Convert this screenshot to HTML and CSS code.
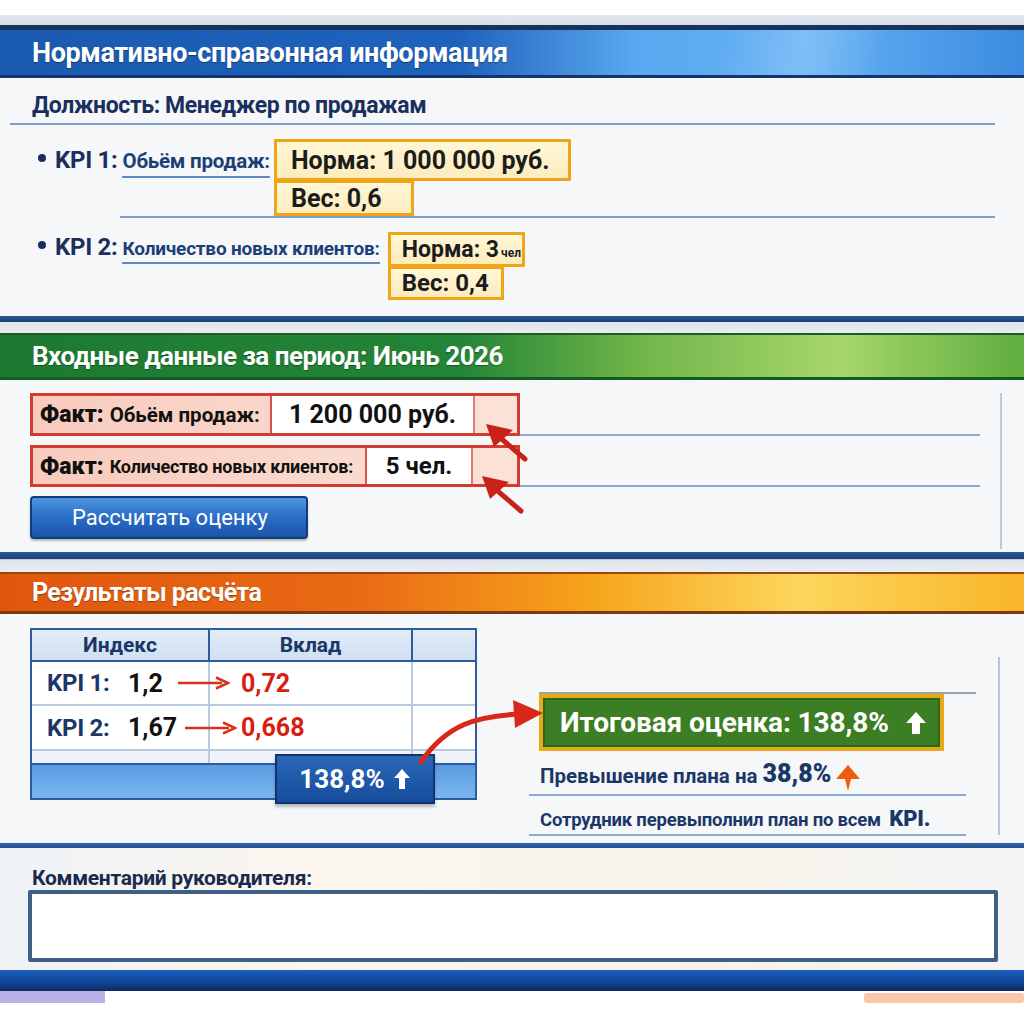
FILE: index.html
```html
<!DOCTYPE html>
<html lang="ru">
<head>
<meta charset="utf-8">
<title>KPI</title>
<link rel="stylesheet" href="styles.css">
</head>
<body>
<div class="page">
  <div class="topstrip"></div>

  <section class="panel">
    <h2 class="bar bar-blue"><span>Нормативно-справонная информация</span></h2>
    <div class="body body1">
      <div class="position">Должность: Менеджер по продажам</div>

      <div class="kpi kpi1">
        <div class="kpi-label"><span class="dot"></span><b class="kpi-num">KPI 1:</b><span class="kpi-name">Обьём продаж:</span></div>
        <div class="stack">
          <div class="ybox ybox-wide">Норма: 1 000 000 руб.</div>
          <div class="ybox ybox-w1">Вес: 0,6</div>
        </div>
      </div>
      <div class="rule rule-kpi"></div>

      <div class="kpi kpi2">
        <div class="kpi-label"><span class="dot"></span><b class="kpi-num">KPI 2:</b><span class="kpi-name">Количество новых клиентов:</span></div>
        <div class="stack">
          <div class="ybox ybox-n2">Норма: 3<small>чел</small></div>
          <div class="ybox ybox-w2">Вес: 0,4</div>
        </div>
      </div>
    </div>
    <div class="sep"></div>
  </section>

  <section class="panel">
    <h2 class="bar bar-green"><span>Входные данные за период: Июнь 2026</span></h2>
    <div class="body body2">
      <div class="inputs">
        <div class="fact-line">
          <div class="fact fact1">
            <span class="fact-label"><b>Факт:</b> Обьём продаж:</span>
            <span class="fact-value fv1">1 200 000 руб.</span>
            <span class="fact-tail"></span>
            <svg class="red-arrow" width="48" height="44" viewBox="0 0 48 44"><path d="M42 38 L14 14" stroke="#c9221b" stroke-width="5" stroke-linecap="round"/><path d="M3 3 L30 9 L11 26 Z" fill="#c9221b"/></svg>
          </div>
          <div class="fill-line"></div>
        </div>
        <div class="fact-line">
          <div class="fact fact2">
            <span class="fact-label"><b>Факт:</b> Количество новых клиентов:</span>
            <span class="fact-value fv2">5 чел.</span>
            <span class="fact-tail"></span>
            <svg class="red-arrow" width="48" height="44" viewBox="0 0 48 44"><path d="M42 38 L14 14" stroke="#c9221b" stroke-width="5" stroke-linecap="round"/><path d="M3 3 L30 9 L11 26 Z" fill="#c9221b"/></svg>
          </div>
          <div class="fill-line"></div>
        </div>
        <button class="calc">Рассчитать оценку</button>
      </div>
    </div>
    <div class="sep sep2"></div>
  </section>

  <section class="panel">
    <h2 class="bar bar-orange"><span>Результаты расчёта</span></h2>
    <div class="body body3">
      <div class="table">
        <div class="tr th"><div class="td">Индекс</div><div class="td">Вклад</div><div class="td"></div></div>
        <div class="tr r1">
          <div class="td c1"><b class="kn">KPI 1:</b><span class="iv">1,2</span><svg class="sarrow" width="52" height="14" viewBox="0 0 52 14"><path d="M0 7 H44" stroke="#d8321e" stroke-width="2.5"/><path d="M38 1.5 L50 7 L38 12.5" fill="none" stroke="#d8321e" stroke-width="2.5"/></svg></div>
          <div class="td c2"><span class="rv">0,72</span></div>
          <div class="td"></div>
        </div>
        <div class="tr r2">
          <div class="td c1"><b class="kn">KPI 2:</b><span class="iv">1,67</span><svg class="sarrow" width="52" height="14" viewBox="0 0 52 14"><path d="M0 7 H44" stroke="#d8321e" stroke-width="2.5"/><path d="M38 1.5 L50 7 L38 12.5" fill="none" stroke="#d8321e" stroke-width="2.5"/></svg></div>
          <div class="td c2"><span class="rv">0,668</span></div>
          <div class="td"></div>
        </div>
        <div class="tr tr-thin"><div class="td"></div><div class="td"></div><div class="td"></div></div>
        <div class="tfoot"></div>
        <div class="total">138,8% <svg width="18" height="22" viewBox="0 0 18 22"><path d="M9 1 L17 10 H12 V21 H6 V10 H1 Z" fill="#fff"/></svg></div>
        <svg class="curve" width="130" height="70" viewBox="0 0 130 70"><path d="M4 64 C30 26 60 18 104 16" fill="none" stroke="#d8281c" stroke-width="5" stroke-linecap="round"/><path d="M96 2 L126 15 L98 30 Z" fill="#d8281c"/></svg>
      </div>

      <div class="summary">
        <div class="score-wrap">
          <div class="score">Итоговая оценка: 138,8% <svg class="wup" width="22" height="24" viewBox="0 0 22 24"><path d="M11 1 L21 12 H15 V23 H7 V12 H1 Z" fill="#fff"/></svg></div>
        </div>
        <div class="note note1">Превышение плана на <b>38,8%</b><svg class="oup" width="26" height="28" viewBox="0 0 26 28"><path d="M13 1 L25 15 H16 L13 27 L10 15 H1 Z" fill="#ec5f12"/></svg></div>
        <div class="note note2">Сотрудник перевыполнил план по всем <b>KPI.</b></div>
      </div>
    </div>
    <div class="sep sep-blue"></div>
  </section>

  <section class="comment">
    <div class="comment-title">Комментарий руководителя:</div>
    <div class="comment-box"></div>
  </section>

  <div class="bottombar"></div>
  <div class="strips"><span class="lav"></span><span class="peach"></span></div>
</div>
</body>
</html>
```

FILE: styles.css
```css
* { box-sizing: border-box; }
html, body { margin: 0; padding: 0; background: #fff; }
body {
  font-family: "Roboto", "Liberation Sans", sans-serif;
  color: #1b2f5e;
}
.page { width: 1024px; height: 1024px; overflow: hidden; padding-top: 15px; }

.topstrip {
  height: 15px;
  background: linear-gradient(#e4e9f0, #d6dee8 65%, #17325e 65%);
}

.bar {
  margin: 0;
  display: flex;
  align-items: center;
  padding-left: 32px;
  color: #fff;
  font-weight: bold;
  border-bottom: 3px solid #153566;
  text-shadow: 0 1px 1px rgba(0,0,0,.35);
}
.bar-blue {
  height: 48px;
  font-size: 27px;
  letter-spacing: -0.4px;
  background:
    linear-gradient(100deg, transparent 70%, rgba(255,255,255,.18) 78%, transparent 86%),
    linear-gradient(90deg, #1a5ab0 0%, #1f63bd 45%, #5aa8ef 62%, #63b0f4 80%, #3b8be0 100%);
}
.bar-green {
  height: 47px;
  font-size: 26px;
  letter-spacing: -0.5px;
  border-top: 2px solid #1a5e26;
  border-bottom-color: #145a24;
  background: linear-gradient(90deg, #1c7a30 0%, #238537 45%, #6fb548 62%, #a7d66d 82%, #5fae3e 100%);
}
.bar-orange {
  height: 42px;
  font-size: 25px;
  letter-spacing: -0.6px;
  border-top: 2px solid #9c4512;
  border-bottom-color: #7b3a10;
  background: linear-gradient(90deg, #e0560f 0%, #ea6a14 35%, #f6a51c 58%, #fcd65c 78%, #f8b62a 100%);
}

.body { background: #f6f7f9; }

/* section 1 */
.body1 { padding: 14px 24px 0 30px; height: 238px; }
.position {
  font-size: 23px; font-weight: bold; color: #1b2f5e; letter-spacing: -0.4px;
  padding-bottom: 4px;
  border-bottom: 2px solid #7f9fca;
  margin-left: -20px; padding-left: 22px; margin-right: 5px;
}
.kpi { display: flex; align-items: flex-start; margin-left: 8px; }
.kpi1 { margin-top: 14px; }
.kpi2 { margin-top: 14px; }
.kpi-label { display: flex; align-items: baseline; white-space: nowrap; }
.kpi1 .kpi-label { padding-top: 7px; }
.kpi2 .kpi-label { padding-top: 1px; }
.dot { width: 8px; height: 8px; border-radius: 50%; background: #1b2f5e; margin-right: 9px; transform: translateY(-6px); flex: none; }
.kpi-num { font-size: 24px; color: #1b2f5e; margin-right: 5px; letter-spacing: -0.3px; }
.kpi-name {
  font-weight: bold; color: #1b3f78; letter-spacing: -0.2px;
  border-bottom: 2px solid #5f8ac2; padding-bottom: 3px;
}
.kpi1 .kpi-name { font-size: 20.5px; }
.kpi2 .kpi-name { font-size: 19px; padding-bottom: 2px; }
.kpi1 .stack { margin-left: 4px; }
.kpi2 .stack { margin-left: 8px; }
.stack { display: flex; flex-direction: column; align-items: flex-start; }
.ybox {
  background: linear-gradient(#fff7d6, #fcecbd);
  border: 3px solid #f0a418;
  color: #1c1c1c;
  font-weight: bold;
  font-size: 25px;
  padding: 0 12px 0 14px;
  white-space: nowrap;
}
.ybox-wide { width: 297px; height: 42px; line-height: 37px; }
.ybox-w1 { width: 140px; height: 36px; line-height: 31px; margin-top: -1px; }
.ybox-n2 { width: 137px; height: 35px; line-height: 30px; padding: 0 4px 0 11px; font-size: 23px; }
.ybox-w2 { width: 116px; height: 34px; line-height: 29px; margin-top: -1px; padding-left: 11px; font-size: 24px; }
.ybox small { font-size: 12px; margin-left: 2px; }
.rule-kpi { margin-left: 90px; border-top: 2px solid #7f9fca; margin-right: 5px; }

.sep { height: 17px; background: linear-gradient(#2b5a98 0, #1c3f77 35%, #dfe5ec 38%, #e9edf2 100%); }
.sep2 { height: 20px; }
.sep-blue { height: 5px; background: linear-gradient(#2d66b3, #244f8f); }

/* section 2 */
.body2 { padding: 13px 0 0 30px; height: 172px; }
.inputs { border-right: 2px solid #bcc9d9; margin-right: 22px; padding-bottom: 10px; }
.fact-line { display: flex; align-items: flex-end; margin-bottom: 9px; }
.fact {
  position: relative;
  display: flex;
  height: 43px;
  border: 3px solid #d23b2f;
  background: linear-gradient(90deg, #f8cbbd, #fbe2d8);
  width: 490px;
  flex: none;
}
.fact2 { height: 42px; }
.fact-label {
  display: flex; align-items: center; gap: 6px;
  padding: 0 0 0 7px;
  font-weight: bold; color: #111; white-space: nowrap;
  border-right: 2px solid #d8544a;
  flex: none;
}
.fact1 .fact-label { width: 239px; font-size: 20.5px; }
.fact2 .fact-label { width: 334px; font-size: 18px; letter-spacing: -0.2px; }
.fact-label b { font-size: 23px; letter-spacing: 0; }
.fact-value {
  background: #fff; color: #111; font-weight: bold; font-size: 25px;
  display: flex; align-items: center; justify-content: center;
  border-right: 2px solid #e27a70;
  flex: none;
}
.fv1 { width: 203px; }
.fv2 { width: 106px; font-size: 24px; }
.fact-tail { flex: 1; }
.red-arrow { position: absolute; top: 25px; z-index: 2; }
.fact1 .red-arrow { left: 450px; }
.fact2 .red-arrow { left: 446px; }
.fill-line { flex: 1; border-bottom: 2px solid #8aaad3; margin-right: 20px; }
.calc {
  display: block;
  margin-top: 7px;
  width: 278px; height: 43px;
  border: 2px solid #123d7d;
  border-radius: 4px;
  background: linear-gradient(#4f95e2, #2a6cc6 50%, #1b55aa);
  color: #fff;
  font-family: inherit;
  font-size: 22px;
  font-weight: normal;
  text-align: left;
  padding-left: 40px;
  box-shadow: 0 2px 2px rgba(0,0,0,.25);
}

/* section 3 */
.body3 { display: flex; align-items: flex-start; padding: 14px 0 0 30px; height: 229px; }
.table {
  position: relative;
  width: 447px; height: 172px;
  border: 2px solid #2c5c9c;
  background: #fff;
  flex: none;
}
.tr { display: grid; grid-template-columns: 178px 203px 1fr; height: 44px; border-bottom: 2px solid #b9c9de; }
.r2 { height: 45px; }
.th { height: 32px; background: linear-gradient(#e2edf8, #cfe0f2); border-bottom: 2px solid #2c5c9c; }
.th .td { font-size: 21px; font-weight: bold; color: #1b3768; text-align: center; line-height: 30px; }
.td { border-right: 2px solid #b9c9de; }
.td:last-child { border-right: none; }
.th .td { border-right-color: #2c5c9c; }
.c1 { display: flex; align-items: center; padding-left: 15px; white-space: nowrap; overflow: visible; position: relative; z-index: 1; }
.c1 > * { flex: none; }
.kn { font-size: 24px; color: #1b3768; width: 81px; letter-spacing: -0.3px; }
.iv { font-size: 25px; font-weight: bold; color: #111; }
.r1 .sarrow { margin-left: 15px; }
.r2 .sarrow { margin-left: 8px; }
.c2 { display: flex; align-items: center; padding-left: 31px; }
.rv { font-size: 25px; font-weight: bold; color: #d81e10; }
.tr-thin { height: 12px; background: #eef3f9; border-bottom: none; }
.tfoot { height: 35px; background: linear-gradient(#5a9ce3, #7cb6ef); border-top: 2px solid #2c5c9c; }
.total {
  position: absolute; left: 243px; top: 124px;
  width: 160px; height: 50px;
  background: linear-gradient(#2a67b8, #164d9c);
  border: 2px solid #0f3470;
  color: #fff; font-size: 26px; font-weight: bold;
  display: flex; align-items: center; justify-content: center; gap: 8px;
  box-shadow: 0 3px 3px rgba(0,0,0,.25);
}
.curve { position: absolute; left: 385px; top: 68px; }

.summary {
  flex: none;
  margin-left: 52px;
  margin-top: 29px;
  width: 471px;
  height: 178px;
  padding-top: 35px;
  border-right: 2px solid #b5c7dc;
}
.score-wrap { border-top: 2px solid #9aa2aa; margin-left: 10px; margin-right: 22px; }
.score {
  width: 405px; height: 57px;
  background: #3c7e23;
  border: 4px solid #e9a917;
  box-shadow: inset 0 0 0 2px #2a651b;
  color: #fff; font-size: 28px; font-weight: bold; letter-spacing: -0.1px;
  display: flex; align-items: center; padding-left: 17px; gap: 16px;
}
.note { font-weight: bold; color: #1b3768; margin-right: 32px; white-space: nowrap; padding-left: 11px; border-bottom: 2px solid #8aaad3; }
.note1 { font-size: 20.5px; height: 45px; display: flex; align-items: flex-end; padding-bottom: 6px; }
.note1 b { font-size: 25px; margin-left: 5px; }
.oup { margin-left: 4px; margin-bottom: 0; transform: translateY(4px); }
.note2 { font-size: 18.5px; height: 40px; padding-top: 10px; letter-spacing: -0.2px; }
.note2 b { font-size: 22px; margin-left: 4px; }

/* comment */
.comment { background: linear-gradient(90deg, #eef2f7, #fbf6ee 30%, #f8f3ea 70%, #f3f4f6); padding: 18px 26px 0 28px; height: 122px; }
.comment-title { font-size: 21px; font-weight: bold; color: #1a2a4c; margin-left: 4px; letter-spacing: -0.3px; }
.comment-box { height: 72px; background: #fff; border: 4px solid #3e5f86; border-radius: 2px; }

.bottombar { height: 21px; background: linear-gradient(#1a5fbf, #0f3f8c 70%, #0a2a5e); }
.strips { position: relative; height: 12px; }
.lav { position: absolute; left: 0; top: 0; width: 105px; height: 12px; background: #b8b1e8; }
.peach { position: absolute; right: 0; top: 2px; width: 160px; height: 10px; background: #f9c8ab; border-radius: 3px; }
```
